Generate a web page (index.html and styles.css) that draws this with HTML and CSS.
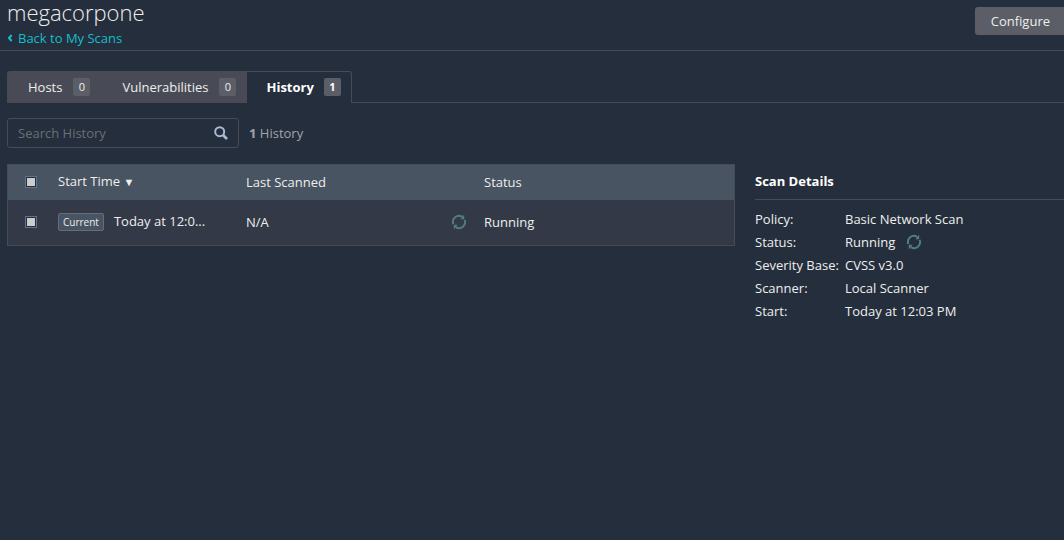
FILE: index.html
```html
<!DOCTYPE html>
<html lang="en">
<head>
<meta charset="utf-8">
<title>megacorpone</title>
<link rel="stylesheet" href="styles.css">
</head>
<body>
<svg class="sprite" aria-hidden="true">
  <symbol id="sync" viewBox="0 0 16 16">
    <path d="M2.4 10.2A6 6 0 0 1 11.2 2.9M13.6 5.8A6 6 0 0 1 4.8 13.1" fill="none" stroke="currentColor" stroke-width="2"/>
    <path d="M13.2 0.6V5.2H9.4ZM2.8 15.4V10.8H6.6Z" fill="currentColor"/>
  </symbol>
</svg>
<header class="page-header">
  <div class="heading">
    <h1 class="title">megacorpone</h1>
    <a class="back" href="#"><svg class="back-icon" viewBox="0 0 6 8" aria-hidden="true"><path d="M4.6 1L2 4L4.6 7" fill="none" stroke="currentColor" stroke-width="2"/></svg>Back to My Scans</a>
  </div>
  <button class="configure" type="button">Configure</button>
</header>
<nav class="tabs">
  <a class="tab" href="#">Hosts<span class="count">0</span></a>
  <a class="tab" href="#">Vulnerabilities<span class="count">0</span></a>
  <a class="tab tab-active" href="#" aria-current="page">History<span class="count">1</span></a>
</nav>
<div class="toolbar">
  <label class="search">
    <input class="search-input" type="text" placeholder="Search History" aria-label="Search History">
    <svg class="search-icon" viewBox="0 0 14 14" aria-hidden="true"><circle cx="5.7" cy="5.7" r="4.5" fill="none" stroke="currentColor" stroke-width="2"/><path d="M9 9L13 13" stroke="currentColor" stroke-width="2.6"/></svg>
  </label>
  <span class="total"><b>1</b> History</span>
</div>
<main class="content">
  <table class="history">
    <thead>
      <tr>
        <th class="col-check"><input class="check" type="checkbox" aria-label="Select all"></th>
        <th class="col-start">Start Time <span class="sort">▼</span></th>
        <th class="col-last">Last Scanned</th>
        <th class="col-icon"></th>
        <th>Status</th>
      </tr>
    </thead>
    <tbody>
      <tr>
        <td><input class="check" type="checkbox" aria-label="Select scan"></td>
        <td><span class="tag">Current</span>Today at 12:0...</td>
        <td>N/A</td>
        <td><svg class="sync"><use href="#sync"/></svg></td>
        <td>Running</td>
      </tr>
    </tbody>
  </table>
  <aside class="details">
    <h2 class="details-title">Scan Details</h2>
    <dl class="details-list">
      <dt>Policy:</dt><dd>Basic Network Scan</dd>
      <dt>Status:</dt><dd>Running<svg class="sync"><use href="#sync"/></svg></dd>
      <dt>Severity Base:</dt><dd>CVSS v3.0</dd>
      <dt>Scanner:</dt><dd>Local Scanner</dd>
      <dt>Start:</dt><dd>Today at 12:03 PM</dd>
    </dl>
  </aside>
</main>
</body>
</html>
```
FILE: styles.css
```css
* { box-sizing: border-box; }
body {
  margin: 0;
  background: #252e3c;
  color: #eee;
  font: 13px/18px "Open Sans", "Noto Sans", sans-serif;
}
.sprite { display: none; }
.page-header {
  display: flex;
  justify-content: space-between;
  align-items: flex-start;
  border-bottom: 1px solid #474b54;
  padding-left: 7px;
}
.heading { padding-bottom: 3px; }
.title {
  margin: 0 0 5px;
  font-size: 22px;
  font-weight: 300;
  line-height: 24px;
}
.back {
  display: flex;
  align-items: center;
  gap: 5px;
  color: #13bfcb;
  text-decoration: none;
}
.back-icon { width: 6px; height: 8px; }
.configure {
  margin-top: 7px;
  padding: 5px 14px 5px 16px;
  border: 0;
  border-radius: 3px 0 0 3px;
  background: #5b5e66;
  color: #eee;
  font: inherit;
}
.tabs {
  display: flex;
  margin: 20px 0 0 7px;
}
.tabs::after {
  content: "";
  flex: 1;
  border-bottom: 1px solid #474b54;
}
.tab {
  display: flex;
  align-items: center;
  gap: 11px;
  height: 32px;
  padding: 0 11px 0 21px;
  background: #484b55;
  color: #eee;
  text-decoration: none;
}
.tab:first-child { border-radius: 3px 0 0 0; }
.tab-active {
  gap: 10px;
  padding: 0 10px 1px 19px;
  background: none;
  border: solid #474b54;
  border-width: 1px 1px 0 0;
  border-radius: 0 3px 0 0;
  color: #fff;
  font-weight: 700;
}
.count {
  min-width: 17px;
  border-radius: 2px;
  background: #5b5e66;
  font-size: 11px;
  text-align: center;
}
.toolbar {
  display: flex;
  align-items: center;
  gap: 10px;
  margin: 15px 0 16px 7px;
}
.search {
  display: flex;
  align-items: center;
  width: 232px;
  height: 30px;
  padding: 0 10px;
  border: 1px solid #474b54;
  border-radius: 3px;
}
.search-input {
  flex: 1;
  min-width: 0;
  padding: 0;
  border: 0;
  outline: 0;
  background: none;
  color: #eee;
  font: inherit;
}
.search-input::placeholder { color: #6b6f76; }
.search-icon { width: 14px; height: 14px; color: #a9b9d4; }
.total { color: #a0a3a9; }
.content {
  display: flex;
  align-items: flex-start;
  gap: 20px;
  padding-left: 7px;
}
.history {
  flex: 1;
  table-layout: fixed;
  border-collapse: separate;
  border-spacing: 0;
  border: 1px solid #474b54;
}
.history th, .history td {
  padding: 0 0 2px;
  font-weight: 400;
  text-align: left;
  white-space: nowrap;
}
.history th { height: 35px; background: #485461; }
.history td { height: 45px; background: #333947; }
.col-check { width: 50px; }
.col-start { width: 188px; }
.col-last { width: 205px; }
.col-icon { width: 33px; }
.sort { font-size: 11px; }
.check {
  appearance: none;
  display: block;
  width: 12px;
  height: 12px;
  margin: 0 0 0 17px;
  padding: 1px;
  border: 1px solid #60738f;
  background: #ccc content-box;
  box-shadow: inset 0 0 0 1px #252e3c;
}
.tag {
  display: inline-block;
  margin-right: 10px;
  padding: 0 4px;
  border: 1px solid #656d77;
  border-radius: 2px;
  background: #485461;
  font-size: 10px;
  line-height: 16px;
}
.sync { display: block; width: 16px; height: 16px; color: #527e7b; }
.details { width: 309px; }
.details-title {
  margin: 0 0 10px;
  padding: 8px 0 9px;
  border-bottom: 1px solid #474b54;
  color: #fff;
  font-size: 13px;
  font-weight: 700;
}
.details-list {
  display: grid;
  grid-template-columns: 90px 1fr;
  row-gap: 5px;
  margin: 0;
}
.details-list dd {
  display: flex;
  align-items: center;
  gap: 11px;
  margin: 0;
}
```
